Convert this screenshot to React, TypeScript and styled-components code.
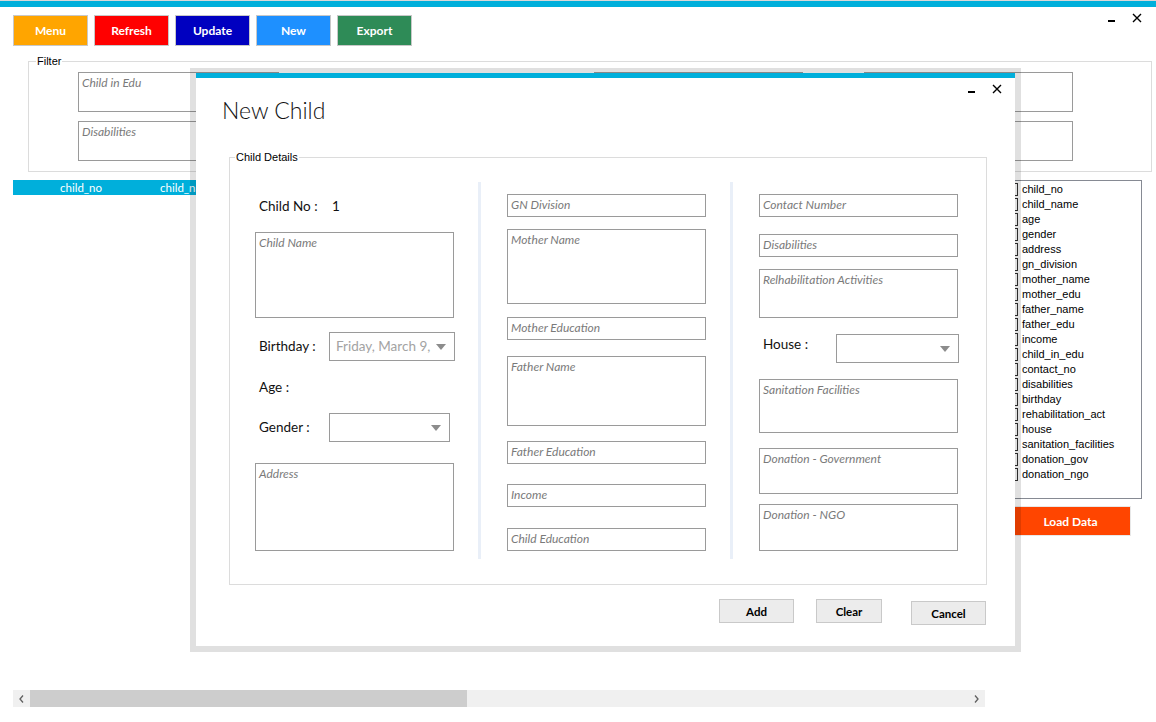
import React from "react";
import styled, { createGlobalStyle } from "styled-components";

const UI = `"Lato", "Open Sans", "Noto Sans", sans-serif`;
const SYS = `"Liberation Sans", Arial, sans-serif`;
const CYAN = "#00afdb";

const Global = createGlobalStyle`
  html, body { margin: 0; padding: 0; background: #fff; }
  body { font-family: ${UI}; width: 1156px; height: 722px; overflow: hidden; }
  * { box-sizing: border-box; }
`;

const Window = styled.div`
  position: relative;
  width: 1156px;
  height: 722px;
  background: #fff;
  overflow: hidden;
`;

const TopStripe = styled.div`
  height: 7px;
  border-top: 1px solid #d8d8d8;
  background: ${CYAN};
`;

const Header = styled.div`
  display: flex;
  justify-content: space-between;
  align-items: flex-start;
  height: 39px;
  padding: 0 14px 0 13px;
`;

const Toolbar = styled.div`
  display: flex;
  gap: 6px;
  margin-top: 8px;
`;

const ToolButton = styled.button<{ $bg: string }>`
  width: 75px;
  height: 31px;
  padding: 0;
  background: ${(p) => p.$bg};
  border: 1px solid #c8c8c8;
  color: #fff;
  font: bold 12px ${UI};
`;

const WinControls = styled.div<{ $mt: number }>`
  display: flex;
  align-items: flex-start;
  gap: 17px;
  margin-top: ${(p) => p.$mt}px;
  svg { display: block; }
`;

const GroupBox = styled.fieldset<{ $ml: number; $w: number; $h: number; $mt: number }>`
  margin: ${(p) => p.$mt}px 0 0 ${(p) => p.$ml}px;
  padding: 0;
  width: ${(p) => p.$w}px;
  height: ${(p) => p.$h}px;
  border: 1px solid #dcdcdc;
  min-width: 0;
`;

const Legend = styled.legend<{ $ml: number }>`
  margin-left: ${(p) => p.$ml}px;
  padding: 0 1px;
  font: 11px/14px ${SYS};
  color: #000;
`;

const FilterRow = styled.div<{ $mt: number }>`
  display: flex;
  height: 40px;
  margin-top: ${(p) => p.$mt}px;
`;

const FilterBox = styled.div<{ $w: number; $ml: number }>`
  width: ${(p) => p.$w}px;
  margin-left: ${(p) => p.$ml}px;
  height: 40px;
  border: 1px solid #9a9a9a;
  padding: 2px 3px;
  font: italic 12px/15px ${UI};
  color: #7a7a7a;
`;

const MainRow = styled.div`
  display: flex;
  align-items: flex-start;
  margin-top: 8px;
  padding-left: 13px;
`;

const Grid = styled.div`
  width: 972px;
  height: 527px;
  display: flex;
  flex-direction: column;
`;

const GridHeader = styled.div`
  display: flex;
  height: 15px;
  background: ${CYAN};
`;

const RowHeaderCell = styled.div`
  width: 42px;
  flex: none;
`;

const HeaderCell = styled.div`
  width: 100px;
  flex: none;
  padding-left: 5px;
  color: #fff;
  font: 11.5px/15px ${UI};
  white-space: nowrap;
  overflow: hidden;
`;

const GridBody = styled.div`
  flex: 1;
  background: #fff;
`;

const HScroll = styled.div`
  height: 17px;
  display: flex;
  align-items: stretch;
  background: #f0f0f0;
`;

const ScrollArrow = styled.div`
  width: 17px;
  flex: none;
  display: flex;
  align-items: center;
  justify-content: center;
`;

const ScrollThumb = styled.div`
  width: 437px;
  flex: none;
  background: #cdcdcd;
`;

const ScrollTrack = styled.div`
  flex: 1;
`;

const SidePanel = styled.div`
  margin-left: 17px;
  display: flex;
  flex-direction: column;
  align-items: flex-start;
`;

const CheckList = styled.div`
  width: 140px;
  height: 319px;
  border: 1px solid #868a93;
  padding: 1px 0 0 1px;
  background: #fff;
`;

const CheckItem = styled.div`
  display: flex;
  align-items: center;
  height: 15px;
  font: 11px/15px ${SYS};
  color: #000;
  white-space: nowrap;
`;

const CheckBox = styled.span`
  width: 13px;
  height: 13px;
  flex: none;
  margin-left: 1px;
  margin-right: 4px;
  border: 1px solid #333;
  background: #fff;
`;

const LoadButton = styled.button`
  margin: 7px 0 0 8px;
  width: 121px;
  height: 30px;
  padding: 0;
  background: #ff4500;
  border: 1px solid #e8e8e8;
  color: #fff;
  font: bold 12px ${UI};
`;

/* ---------- Dialog ---------- */

const DialogShadow = styled.div`
  position: absolute;
  left: 190px;
  top: 68px;
  padding: 5px 6px 6px 6px;
  background: rgba(0, 0, 0, 0.12);
`;

const Dialog = styled.div`
  width: 819px;
  height: 573px;
  background: #fff;
  display: flex;
  flex-direction: column;
`;

const DialogStripe = styled.div`
  height: 5px;
  background: ${CYAN};
  flex: none;
`;

const DialogHeader = styled.div`
  display: flex;
  justify-content: space-between;
  align-items: flex-start;
  height: 46px;
  padding: 0 13px 0 26px;
  flex: none;
`;

const Title = styled.h1`
  margin: 18px 0 0 0;
  font: 300 23px/28px ${UI};
  color: #111;
`;

const Columns = styled.div`
  display: grid;
  grid-template-columns: 248px 3px 249px 3px 1fr;
  height: 377px;
  margin-top: 18px;
`;

const Column = styled.div<{ $pl: number }>`
  display: flex;
  flex-direction: column;
  align-items: flex-start;
  padding-left: ${(p) => p.$pl}px;
`;

const Separator = styled.div`
  background: #e9eff8;
`;

const Field = styled.div<{ $h: number; $mt: number }>`
  width: 199px;
  height: ${(p) => p.$h}px;
  margin-top: ${(p) => p.$mt}px;
  border: 1px solid #9a9a9a;
  padding: 2px 3px;
  font: italic 12px/15px ${UI};
  color: #7a7a7a;
  flex: none;
`;

const LabelRow = styled.div<{ $mt: number }>`
  display: flex;
  align-items: center;
  margin-top: ${(p) => p.$mt}px;
  padding-left: 4px;
  min-height: 19px;
`;

const Label = styled.span<{ $w: number; $lift?: number }>`
  width: ${(p) => p.$w}px;
  flex: none;
  margin-bottom: ${(p) => (p.$lift || 0) * 2}px;
  font: 13.5px/19px ${UI};
  color: #111;
  white-space: nowrap;
`;

const Value = styled.span`
  font: 13.5px/19px ${UI};
  color: #111;
`;

const Combo = styled.div<{ $w: number }>`
  width: ${(p) => p.$w}px;
  height: 29px;
  border: 1px solid #9a9a9a;
  display: flex;
  align-items: center;
  flex: none;
`;

const ComboText = styled.span`
  flex: 1;
  min-width: 0;
  padding-left: 6px;
  overflow: hidden;
  white-space: nowrap;
  font: 13.5px/19px ${UI};
  color: #a3a3a3;
`;

const ComboArrow = styled.span`
  width: 0;
  height: 0;
  flex: none;
  margin: 1px 8px 0 2px;
  border-left: 5.5px solid transparent;
  border-right: 5.5px solid transparent;
  border-top: 6px solid #8c8c8c;
`;

const Footer = styled.div`
  display: flex;
  justify-content: flex-end;
  align-items: flex-start;
  padding-right: 29px;
  margin-top: 14px;
`;

const DialogButton = styled.button<{ $w: number; $ml: number; $mt: number }>`
  width: ${(p) => p.$w}px;
  height: 24px;
  margin-left: ${(p) => p.$ml}px;
  margin-top: ${(p) => p.$mt}px;
  padding: 0;
  background: #ececec;
  border: 1px solid #c9c9c9;
  color: #000;
  font: bold 11.5px ${UI};
`;

function Controls({ mt }: { mt: number }) {
  return (
    <WinControls $mt={mt}>
      <svg width="7" height="10" viewBox="0 0 7 10">
        <rect x="0" y="7" width="7" height="2" fill="#000" />
      </svg>
      <svg width="10" height="10" viewBox="0 0 10 10">
        <path d="M1 1 L9 9 M9 1 L1 9" stroke="#000" strokeWidth="1.4" fill="none" />
      </svg>
    </WinControls>
  );
}

function Chevron({ dir }: { dir: "left" | "right" }) {
  return (
    <svg width="5" height="8" viewBox="0 0 5 8">
      <path
        d={dir === "left" ? "M4 0.5 L1 4 L4 7.5" : "M1 0.5 L4 4 L1 7.5"}
        stroke="#606060"
        strokeWidth="1.3"
        fill="none"
      />
    </svg>
  );
}

const toolButtons = [
  { label: "Menu", bg: "#ffa500" },
  { label: "Refresh", bg: "#ff0000" },
  { label: "Update", bg: "#0000c0" },
  { label: "New", bg: "#1e90ff" },
  { label: "Export", bg: "#2e8b57" },
];

const gridColumns = [
  "child_no",
  "child_name",
  "age",
  "gender",
  "address",
  "gn_division",
  "mother_name",
  "mother_edu",
  "father_name",
];

const checkItems = [
  "child_no",
  "child_name",
  "age",
  "gender",
  "address",
  "gn_division",
  "mother_name",
  "mother_edu",
  "father_name",
  "father_edu",
  "income",
  "child_in_edu",
  "contact_no",
  "disabilities",
  "birthday",
  "rehabilitation_act",
  "house",
  "sanitation_facilities",
  "donation_gov",
  "donation_ngo",
];

export default function App() {
  return (
    <>
      <Global />
      <Window>
        <TopStripe />
        <Header>
          <Toolbar>
            {toolButtons.map((b) => (
              <ToolButton key={b.label} $bg={b.bg}>
                {b.label}
              </ToolButton>
            ))}
          </Toolbar>
          <Controls mt={6} />
        </Header>

        <GroupBox $ml={28} $w={1124} $h={118} $mt={8}>
          <Legend $ml={7}>Filter</Legend>
          <FilterRow $mt={4}>
            <FilterBox $w={201} $ml={49}>Child in Edu</FilterBox>
            <FilterBox $w={209} $ml={315} />
            <FilterBox $w={209} $ml={61} />
          </FilterRow>
          <FilterRow $mt={9}>
            <FilterBox $w={201} $ml={49}>Disabilities</FilterBox>
            <FilterBox $w={209} $ml={315} />
            <FilterBox $w={209} $ml={61} />
          </FilterRow>
        </GroupBox>

        <MainRow>
          <Grid>
            <GridHeader>
              <RowHeaderCell />
              {gridColumns.map((c) => (
                <HeaderCell key={c}>{c}</HeaderCell>
              ))}
            </GridHeader>
            <GridBody />
            <HScroll>
              <ScrollArrow>
                <Chevron dir="left" />
              </ScrollArrow>
              <ScrollThumb />
              <ScrollTrack />
              <ScrollArrow>
                <Chevron dir="right" />
              </ScrollArrow>
            </HScroll>
          </Grid>
          <SidePanel>
            <CheckList>
              {checkItems.map((c) => (
                <CheckItem key={c}>
                  <CheckBox />
                  {c}
                </CheckItem>
              ))}
            </CheckList>
            <LoadButton>Load Data</LoadButton>
          </SidePanel>
        </MainRow>

        <DialogShadow>
          <Dialog>
            <DialogStripe />
            <DialogHeader>
              <Title>New Child</Title>
              <Controls mt={6} />
            </DialogHeader>
            <GroupBox $ml={33} $w={758} $h={435} $mt={26}>
              <Legend $ml={5}>Child Details</Legend>
              <Columns>
                <Column $pl={25}>
                  <LabelRow $mt={15}>
                    <Label $w={73}>Child No :</Label>
                    <Value>1</Value>
                  </LabelRow>
                  <Field $h={86} $mt={16}>Child Name</Field>
                  <LabelRow $mt={14}>
                    <Label $w={70}>Birthday :</Label>
                    <Combo $w={126}>
                      <ComboText>Friday, March 9,</ComboText>
                      <ComboArrow />
                    </Combo>
                  </LabelRow>
                  <LabelRow $mt={17}>
                    <Label $w={70}>Age :</Label>
                  </LabelRow>
                  <LabelRow $mt={16}>
                    <Label $w={70}>Gender :</Label>
                    <Combo $w={121}>
                      <ComboText />
                      <ComboArrow />
                    </Combo>
                  </LabelRow>
                  <Field $h={88} $mt={21}>Address</Field>
                </Column>
                <Separator />
                <Column $pl={26}>
                  <Field $h={23} $mt={12}>GN Division</Field>
                  <Field $h={75} $mt={12}>Mother Name</Field>
                  <Field $h={23} $mt={13}>Mother Education</Field>
                  <Field $h={70} $mt={16}>Father Name</Field>
                  <Field $h={23} $mt={15}>Father Education</Field>
                  <Field $h={23} $mt={20}>Income</Field>
                  <Field $h={23} $mt={21}>Child Education</Field>
                </Column>
                <Separator />
                <Column $pl={26}>
                  <Field $h={23} $mt={12}>Contact Number</Field>
                  <Field $h={23} $mt={17}>Disabilities</Field>
                  <Field $h={49} $mt={12}>Relhabilitation Activities</Field>
                  <LabelRow $mt={16}>
                    <Label $w={73} $lift={4}>House :</Label>
                    <Combo $w={123}>
                      <ComboText />
                      <ComboArrow />
                    </Combo>
                  </LabelRow>
                  <Field $h={54} $mt={16}>Sanitation Facilities</Field>
                  <Field $h={46} $mt={15}>Donation - Government</Field>
                  <Field $h={47} $mt={10}>Donation - NGO</Field>
                </Column>
              </Columns>
            </GroupBox>
            <Footer>
              <DialogButton $w={75} $ml={0} $mt={0}>Add</DialogButton>
              <DialogButton $w={66} $ml={22} $mt={0}>Clear</DialogButton>
              <DialogButton $w={75} $ml={29} $mt={2}>Cancel</DialogButton>
            </Footer>
          </Dialog>
        </DialogShadow>
      </Window>
    </>
  );
}
